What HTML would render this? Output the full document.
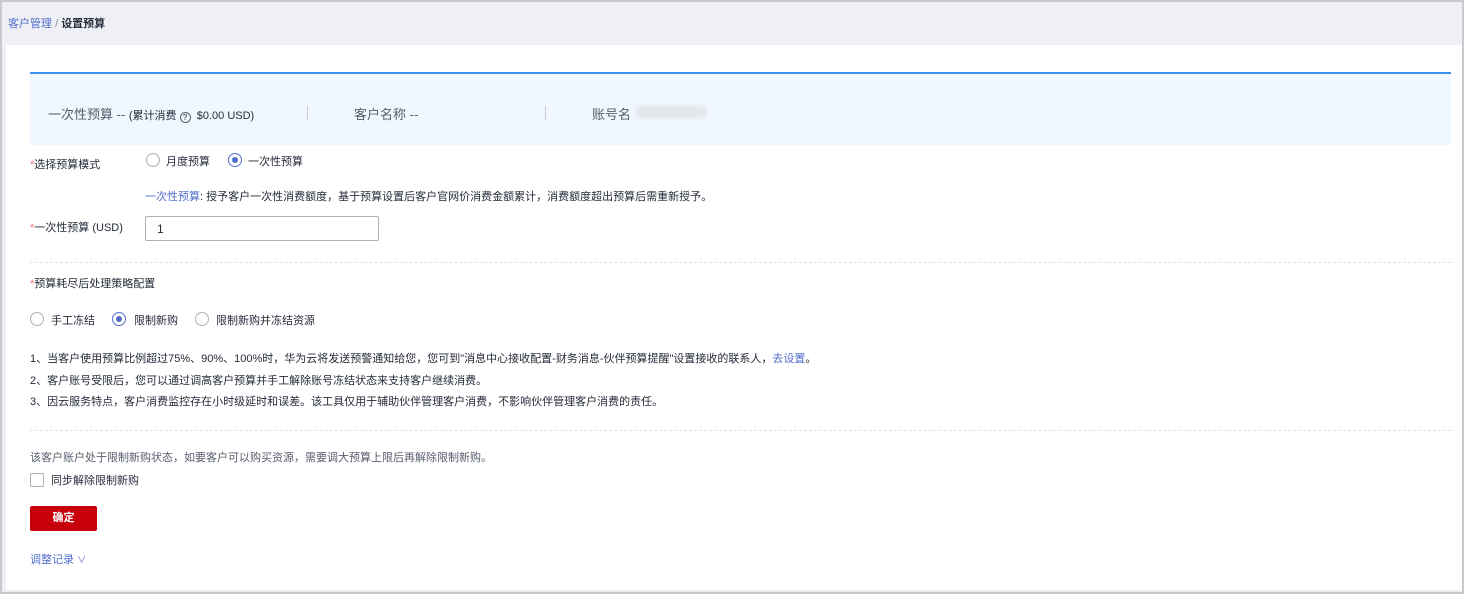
<!DOCTYPE html>
<html><head><meta charset="utf-8"><style>
*{margin:0;padding:0;box-sizing:border-box}
body{width:1464px;height:594px;position:relative;overflow:hidden;background:#c9c9cc;font-family:"Liberation Sans","Noto Sans CJK SC",sans-serif;color:#252b3a;font-size:11px}
.a{position:absolute;white-space:nowrap}
.bg{position:absolute;left:2px;top:2px;width:1460px;height:590px;background:#eff0f5}
.card{position:absolute;left:6px;top:45px;width:1456px;height:545px;background:#fff}
.info{position:absolute;left:30px;top:72px;width:1421px;height:73px;background:#f0f7ff;border-top:2px solid #3b8ff0}
.sep{position:absolute;width:1px;height:14px;background:#c7ccd4;top:106px}
.radio{position:absolute;width:14px;height:14px;border:1px solid #adb0b8;border-radius:50%;background:#fff}
.radio.on{border-color:#526ecc}
.radio.on:after{content:"";position:absolute;left:3px;top:3px;width:6px;height:6px;border-radius:50%;background:#526ecc}
.star{color:#f66f6a}
.dash{position:absolute;left:30px;width:1421px;border-top:1px dashed #e0e0e0}
.blue{color:#526ecc}
</style></head><body>
<div class="bg"></div>
<div class="a" style="left:8px;top:15px"><span class="blue">客户管理</span> <span style="color:#8a8e99">/</span> <b>设置预算</b></div>
<div class="card"></div>
<div class="info"></div>
<div class="a" style="left:48px;top:104px;font-size:13px;color:#575d6c">一次性预算 -- <span style="font-size:11px;color:#252b3a">(累计消费 <span style="display:inline-block;width:11px;height:11px;border:1px solid #575d6c;border-radius:50%;font-size:8px;text-align:center;line-height:9px;vertical-align:-1px">?</span> &nbsp;$0.00 USD)</span></div>
<div class="sep" style="left:307px"></div>
<div class="a" style="left:354px;top:104px;font-size:13px;color:#575d6c">客户名称 --</div>
<div class="sep" style="left:545px"></div>
<div class="a" style="left:592px;top:104px;font-size:13px;color:#575d6c">账号名</div>
<div class="a" style="left:636px;top:106px;width:70px;height:12px;background:#e4e6ea;filter:blur(2px)"></div>
<div class="a" style="left:30px;top:156px"><span class="star">*</span>选择预算模式</div>
<div class="radio" style="left:146px;top:153px"></div><div class="a" style="left:166px;top:153px">月度预算</div>
<div class="radio on" style="left:228px;top:153px"></div><div class="a" style="left:248px;top:153px">一次性预算</div>
<div class="a" style="left:145px;top:188px"><span class="blue">一次性预算</span>: 授予客户一次性消费额度，基于预算设置后客户官网价消费金额累计，消费额度超出预算后需重新授予。</div>
<div class="a" style="left:30px;top:219px"><span class="star">*</span>一次性预算 (USD)</div>
<div class="a" style="left:145px;top:216px;width:234px;height:25px;border:1px solid #adb0b8;border-radius:2px;padding:5px 11px;font-size:12px">1</div>
<div class="dash" style="top:262px"></div>
<div class="a" style="left:30px;top:275px"><span class="star">*</span>预算耗尽后处理策略配置</div>
<div class="radio" style="left:30px;top:312px"></div><div class="a" style="left:51px;top:312px">手工冻结</div>
<div class="radio on" style="left:112px;top:312px"></div><div class="a" style="left:134px;top:312px">限制新购</div>
<div class="radio" style="left:195px;top:312px"></div><div class="a" style="left:216px;top:312px">限制新购并冻结资源</div>
<div class="a" style="left:30px;top:350px">1、当客户使用预算比例超过75%、90%、100%时，华为云将发送预警通知给您，您可到"消息中心接收配置-财务消息-伙伴预算提醒"设置接收的联系人，<span class="blue">去设置</span>。</div>
<div class="a" style="left:30px;top:372px">2、客户账号受限后，您可以通过调高客户预算并手工解除账号冻结状态来支持客户继续消费。</div>
<div class="a" style="left:30px;top:393px">3、因云服务特点，客户消费监控存在小时级延时和误差。该工具仅用于辅助伙伴管理客户消费，不影响伙伴管理客户消费的责任。</div>
<div class="dash" style="top:430px"></div>
<div class="a" style="left:30px;top:449px;color:#575d6c">该客户账户处于限制新购状态，如要客户可以购买资源，需要调大预算上限后再解除限制新购。</div>
<div class="a" style="left:30px;top:473px;width:14px;height:14px;border:1px solid #adb0b8;border-radius:2px"></div>
<div class="a" style="left:51px;top:472px">同步解除限制新购</div>
<div class="a" style="left:30px;top:506px;width:67px;height:25px;background:#c7000b;border-radius:2px;color:#fff;font-weight:bold;text-align:center;line-height:25px">确定</div>
<div class="a blue" style="left:30px;top:551px">调整记录 <span style="font-size:9px">∨</span></div>
</body></html>
